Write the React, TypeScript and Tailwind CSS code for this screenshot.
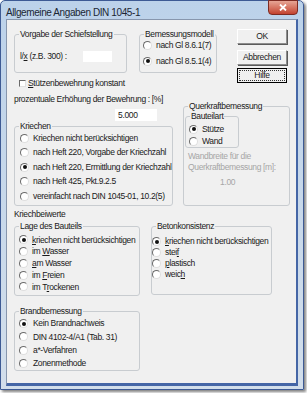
import React from 'react';

type Opt = { label: React.ReactNode; checked?: boolean };

const Radio = ({ checked }: { checked?: boolean }) => (
  <span className="flex h-[9px] w-[9px] shrink-0 items-center justify-center rounded-full border border-t-[#6b6b6b] border-l-[#6b6b6b] border-r-[#dedede] border-b-[#dedede] bg-white">
    {checked && <span className="h-[4px] w-[4px] rounded-full bg-[#111]" />}
  </span>
);

const RadioList = ({ items, rowH, gap, className }: { items: Opt[]; rowH: string; gap: string; className?: string }) => (
  <div className={className}>
    {items.map((it, i) => (
      <div key={i} className={`flex items-center ${rowH} ${gap}`}>
        <Radio checked={it.checked} />
        <span className="whitespace-nowrap">{it.label}</span>
      </div>
    ))}
  </div>
);

const Group = ({ title, className, children }: { title: string; className?: string; children?: React.ReactNode }) => (
  <fieldset className={`rounded-[3px] border border-[#c8ccd0] ${className ?? ''}`}>
    <legend className="ml-[4px] px-[1px] leading-[10px]">{title}</legend>
    {children}
  </fieldset>
);

const Btn = ({ children, focus }: { children: React.ReactNode; focus?: boolean }) => (
  <div
    className={`flex h-[15px] w-[50px] items-center justify-center bg-[#f0f0f0] ${
      focus
        ? 'border border-black p-[1px]'
        : 'border border-t-white border-l-white border-r-[#8c8c8c] border-b-[#8c8c8c] shadow-[1px_1px_0_#5a5a5a]'
    }`}
  >
    {focus ? (
      <span className="flex h-full w-full items-center justify-center border border-dotted border-[#333]">{children}</span>
    ) : (
      children
    )}
  </div>
);

export default function App() {
  return (
    <div className="h-[393px] w-[307px] bg-white font-['Liberation_Sans',Arial,sans-serif] text-[8.5px] tracking-[-0.35px] text-[#1a1a1a]">
      <div className="flex h-[390px] w-[304px] flex-col rounded-t-[5px] border border-[#3d5a94] bg-gradient-to-b from-[#bcd2ea] to-[#d2deeb] px-[5px] pb-[3px] shadow-[2px_2px_3px_rgba(0,0,0,0.5)]">
        {/* Titelleiste */}
        <div className="flex h-[18px] items-start">
          <span className="mt-[4px] text-[10px] tracking-[-0.4px] text-[#1b2633]">Allgemeine Angaben DIN 1045-1</span>
          <div className="-mt-px ml-auto flex h-[15px] w-[30px] items-center justify-center rounded-b-[4px] border border-[#7d2b22] bg-gradient-to-b from-[#e6a595] to-[#c2412f]">
            <svg width="8" height="7" viewBox="0 0 8 7">
              <path d="M1 0.5 L7 6.5 M7 0.5 L1 6.5" stroke="white" strokeWidth="1.8" />
            </svg>
          </div>
        </div>

        {/* Client */}
        <div className="flex-1 border border-[#8796ad] border-r-2 border-b-[3px] border-r-[#4566a6] border-b-[#4566a6] bg-[#f0f0f0] pl-[7px] pt-[9px]">
          <div className="flex items-start">
            <div className="flex flex-col">
              <div className="flex">
                <Group title="Vorgabe der Schiefstellung" className="h-[44px] w-[113px]">
                  <div className="mt-[11px] flex h-[12px] items-center pl-[5px]">
                    <span className="w-[63px] whitespace-nowrap">
                      l/<u>x</u> (z.B. 300) :
                    </span>
                    <span className="h-[11px] w-[29px] bg-white" />
                  </div>
                </Group>
                <Group title="Bemessungsmodell" className="ml-[12px] h-[44px] w-[78px]">
                  <div className="pl-[3px]">
                    <div className="flex h-[12px] items-center gap-[4px]">
                      <Radio />
                      <span className="whitespace-nowrap">nach Gl 8.6.1(7)</span>
                    </div>
                    <div className="mt-[4px] flex h-[12px] items-center gap-[4px]">
                      <Radio checked />
                      <span className="whitespace-nowrap">nach Gl 8.5.1(4)</span>
                    </div>
                  </div>
                </Group>
              </div>
              <div className="mt-[5px] flex h-[10px] items-center pl-[5px]">
                <span className="h-[7px] w-[7px] border border-t-[#6b6b6b] border-l-[#6b6b6b] border-r-[#e0e0e0] border-b-[#e0e0e0] bg-white" />
                <span className="ml-[2px]">
                  <u>S</u>tützenbewehrung konstant
                </span>
              </div>
            </div>
            <div className="ml-[20px] flex flex-col">
              <Btn>OK</Btn>
              <div className="mt-[6px]">
                <Btn>Abbrechen</Btn>
              </div>
              <div className="mt-[3px]">
                <Btn focus>Hilfe</Btn>
              </div>
            </div>
          </div>

          <div className="mt-[6px] flex items-start">
            <div className="flex w-[159px] flex-col">
              <div className="h-[10px] whitespace-nowrap leading-[10px]">prozentuale Erhöhung der Bewehrung : [%]</div>
              <div className="ml-[101px] mt-[5px] h-[12px] w-[42px] bg-white pl-[3px] leading-[12px]">5.000</div>
              <Group title="Kriechen" className="h-[85px] w-[159px]">
                <RadioList
                  className="pl-[5px]"
                  rowH="h-[14.5px]"
                  gap="gap-[4px]"
                  items={[
                    { label: 'Kriechen nicht berücksichtigen' },
                    { label: 'nach Heft 220, Vorgabe der Kriechzahl' },
                    { label: 'nach Heft 220, Ermittlung der Kriechzahl', checked: true },
                    { label: 'nach Heft 425, Pkt.9.2.5' },
                    { label: 'vereinfacht nach DIN 1045-01, 10.2(5)' },
                  ]}
                />
              </Group>
            </div>
            <div className="ml-[10px] pt-[7px]">
              <Group title="Querkraftbemessung" className="h-[105px] w-[107px]">
                <Group title="Bauteilart" className="ml-[1px] h-[37px] w-[54px]">
                  <RadioList
                    className="pl-[3px] pt-[2px]"
                    rowH="h-[12px]"
                    gap="gap-[4px]"
                    items={[{ label: 'Stütze', checked: true }, { label: 'Wand' }]}
                  />
                </Group>
                <div className="mt-[3px] pl-[4px] leading-[11px] text-[#a6a6a6]">
                  <div>Wandbreite für die</div>
                  <div className="whitespace-nowrap">Querkraftbemessung [m]:</div>
                </div>
                <div className="mt-[4px] pl-[36px] leading-[10px] text-[#a6a6a6]">1.00</div>
              </Group>
            </div>
          </div>

          <div className="mt-[3px] h-[10px] leading-[10px]">Kriechbeiwerte</div>

          <div className="mt-[2px] flex items-start">
            <Group title="Lage des Bauteils" className="h-[75px] w-[126px]">
              <RadioList
                className="pl-[4px] pt-[3px]"
                rowH="h-[11.75px]"
                gap="gap-[4px]"
                items={[
                  { label: <><u>k</u>riechen nicht berücksichtigen</>, checked: true },
                  { label: <>im <u>W</u>asser</> },
                  { label: <><u>a</u>m Wasser</> },
                  { label: <>im <u>F</u>reien</> },
                  { label: <>im T<u>r</u>ockenen</> },
                ]}
              />
            </Group>
            <Group title="Betonkonsistenz" className="ml-[11px] h-[74px] w-[121px]">
              <RadioList
                className="pt-[5px]"
                rowH="h-[11px]"
                gap="gap-[4px]"
                items={[
                  { label: <><u>k</u>riechen nicht berücksichtigen</>, checked: true },
                  { label: <>stei<u>f</u></> },
                  { label: <><u>p</u>lastisch</> },
                  { label: <>weic<u>h</u></> },
                ]}
              />
            </Group>
          </div>

          <Group title="Brandbemessung" className="mt-[10px] h-[65px] w-[126px]">
            <RadioList
              className="pl-[4px] pt-[1px]"
              rowH="h-[13.3px]"
              gap="gap-[5px]"
              items={[
                { label: 'Kein Brandnachweis', checked: true },
                { label: 'DIN 4102-4/A1 (Tab. 31)' },
                { label: 'a*-Verfahren' },
                { label: 'Zonenmethode' },
              ]}
            />
          </Group>
        </div>
      </div>
    </div>
  );
}
